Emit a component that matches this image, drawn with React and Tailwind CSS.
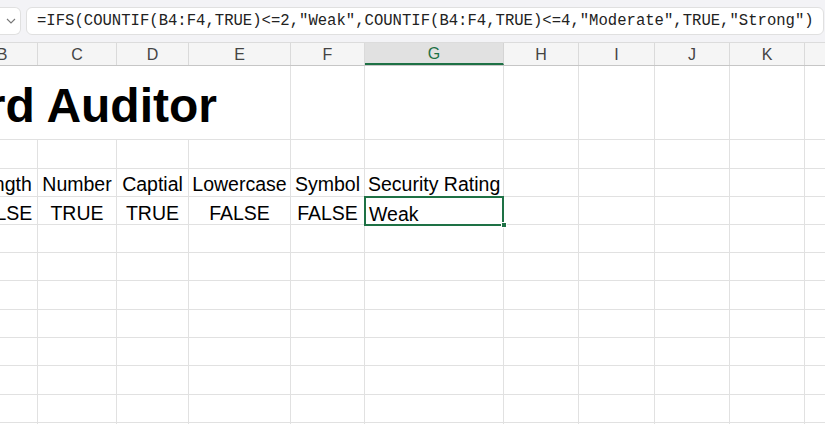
import React from 'react';

const cols = [
  { l: 'B', w: 38 },
  { l: 'C', w: 79 },
  { l: 'D', w: 72 },
  { l: 'E', w: 102 },
  { l: 'F', w: 74 },
  { l: 'G', w: 139 },
  { l: 'H', w: 75 },
  { l: 'I', w: 76 },
  { l: 'J', w: 75 },
  { l: 'K', w: 75 },
  { l: 'L', w: 60 },
];

const heads = ['Length', 'Number', 'Captial', 'Lowercase', 'Symbol'];
const vals = ['FALSE', 'TRUE', 'TRUE', 'FALSE', 'FALSE'];
const emptyHeights = [28, 28, 29, 28, 28, 29, 28, 28, 28, 29];

const formula = '=IFS(COUNTIF(B4:F4,TRUE)<=2,"Weak",COUNTIF(B4:F4,TRUE)<=4,"Moderate",TRUE,"Strong")';

function Cell({ w, children, className = '' }) {
  return (
    <div style={{ width: w }} className={`shrink-0 h-full border-r border-b border-[#e1e1e1] ${className}`}>
      {children}
    </div>
  );
}

// B column is scrolled off to the left, so its content is centred on a wider box
function BCell({ children }) {
  return (
    <Cell w={38} className="flex justify-end overflow-hidden">
      <div className="w-[70px] shrink-0 text-center">{children}</div>
    </Cell>
  );
}

export default function App() {
  return (
    <div className="w-[825px] h-[424px] overflow-hidden bg-white text-black font-['Liberation_Sans',Arial,sans-serif]">
      {/* formula bar */}
      <div className="h-[43px] bg-[#f3f3f6] flex items-center border-b border-[#dcdcdc]">
        <div className="w-[21px] h-[28px] bg-white rounded-r-md border border-l-0 border-[#e0e0e0] flex items-center justify-end pr-[4px]">
          <svg width="10" height="6" viewBox="0 0 10 6" fill="none">
            <path d="M1 1l4 4 4-4" stroke="#777" strokeWidth="1.1" />
          </svg>
        </div>
        <div className="ml-[5px] w-[798px] h-[28px] bg-white rounded-md border border-[#e0e0e0] flex items-center pl-[10px] whitespace-nowrap overflow-hidden">
          <span className="font-['Liberation_Mono',monospace] text-[15.6px] text-[#222] leading-none pt-[1px]">{formula}</span>
        </div>
      </div>

      {/* column letters */}
      <div className="h-[23px] flex bg-[#f5f5f5] border-b border-[#c6c6c6]">
        {cols.map((c) =>
          c.l === 'G' ? (
            <div key={c.l} style={{ width: c.w }} className="shrink-0 h-full bg-[#e1e1e1] border-r border-[#d4d4d4] border-b-2 border-b-[#1e7145] flex items-center justify-center text-[16px] text-[#1e7145] pt-[2px]">
              {c.l}
            </div>
          ) : c.l === 'B' ? (
            <div key={c.l} style={{ width: c.w }} className="shrink-0 h-full border-r border-[#dadada] flex justify-end overflow-hidden">
              <div className="w-[70px] shrink-0 flex items-center justify-center text-[16px] text-[#444] pt-[2px]">{c.l}</div>
            </div>
          ) : (
            <div key={c.l} style={{ width: c.w }} className="shrink-0 h-full border-r border-[#dadada] flex items-center justify-center text-[16px] text-[#444] pt-[2px]">
              {c.l}
            </div>
          )
        )}
      </div>

      {/* row 2: title overflows across B..E */}
      <div className="h-[74px] flex">
        <div className="w-[291px] shrink-0 h-full border-r border-b border-[#e1e1e1]">
          <div className="w-[217px] flex justify-end overflow-hidden whitespace-nowrap pt-[16px]">
            <span className="shrink-0 text-[48px] font-bold leading-none">Password Auditor</span>
          </div>
        </div>
        {cols.slice(4).map((c) => (
          <Cell key={c.l} w={c.w} />
        ))}
      </div>

      {/* row 3 */}
      <div className="h-[29px] flex">
        {cols.map((c) => (
          <Cell key={c.l} w={c.w} />
        ))}
      </div>

      {/* row 4: headings */}
      <div className="h-[28px] flex text-[19.5px] leading-none">
        <BCell>
          <div className="pt-[6px]">{heads[0]}</div>
        </BCell>
        {heads.slice(1).map((h, i) => (
          <Cell key={h} w={cols[i + 1].w} className="text-center pt-[6px] whitespace-nowrap">
            {h}
          </Cell>
        ))}
        <Cell w={139} className="pl-[3px] pt-[6px] whitespace-nowrap">Security Rating</Cell>
        {cols.slice(6).map((c) => (
          <Cell key={c.l} w={c.w} />
        ))}
      </div>

      {/* row 5: values */}
      <div className="h-[28px] flex text-[19.5px] leading-none">
        <BCell>
          <div className="pt-[7px]">{vals[0]}</div>
        </BCell>
        {vals.slice(1).map((v, i) => (
          <Cell key={i} w={cols[i + 1].w} className="text-center pt-[7px]">
            {v}
          </Cell>
        ))}
        <div className="w-[139px] shrink-0 h-full relative border-r border-b border-[#e1e1e1]">
          <div className="absolute left-[-1px] top-[-1px] w-[140px] h-[30px] border-2 border-[#1e7145] pl-[3px] pt-[7px]">Weak</div>
          <div className="absolute right-[-4px] bottom-[-4px] w-[6px] h-[6px] bg-[#1e7145] border border-white" />
        </div>
        {cols.slice(6).map((c) => (
          <Cell key={c.l} w={c.w} />
        ))}
      </div>

      {/* empty rows */}
      {emptyHeights.map((h, r) => (
        <div key={r} style={{ height: h }} className="flex">
          {cols.map((c) => (
            <Cell key={c.l} w={c.w} />
          ))}
        </div>
      ))}
    </div>
  );
}
